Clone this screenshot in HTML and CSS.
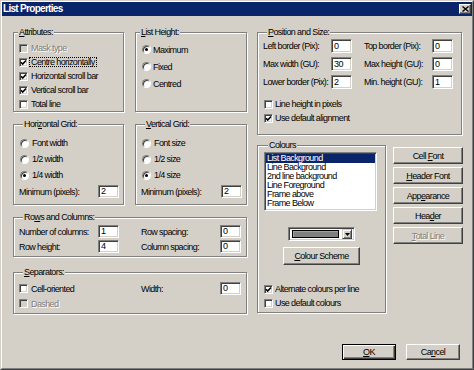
FILE: index.html
```html
<!DOCTYPE html>
<html>
<head>
<meta charset="utf-8">
<title>List Properties</title>
<link rel="stylesheet" href="styles.css">
</head>
<body>
<div class="window">
  <div class="frame">
    <div class="titlebar">
      <span class="title">List Properties</span>
      <span class="close"><svg width="7" height="6" viewBox="0 0 7 6"><path d="M0.5 0.5 L6.5 5.5 M6.5 0.5 L0.5 5.5" stroke="#000" stroke-width="1.4" fill="none"/></svg></span>
    </div>
    <div class="content">
      <div class="main">
        <div class="col-left">
          <div class="row-pair pair-top">
            <div class="group g-attr">
              <div class="legend"><u>A</u>ttributes:</div>
              <div class="list">
                <div class="check disabled"><span class="cb"></span><span>Mask type</span></div>
                <div class="check"><span class="cb"><svg width="7" height="7" viewBox="0 0 7 7"><path d="M1 3.2 L2.7 5 L6 1.5" stroke="#000" stroke-width="1.6" fill="none"/></svg></span><span class="focus">Centre horizontally</span></div>
                <div class="check"><span class="cb"><svg width="7" height="7" viewBox="0 0 7 7"><path d="M1 3.2 L2.7 5 L6 1.5" stroke="#000" stroke-width="1.6" fill="none"/></svg></span><span>Horizontal scroll bar</span></div>
                <div class="check"><span class="cb"><svg width="7" height="7" viewBox="0 0 7 7"><path d="M1 3.2 L2.7 5 L6 1.5" stroke="#000" stroke-width="1.6" fill="none"/></svg></span><span>Vertical scroll bar</span></div>
                <div class="check"><span class="cb"></span><span>Total line</span></div>
              </div>
            </div>
            <div class="group g-height">
              <div class="legend"><u>L</u>ist Height:</div>
              <div class="list">
                <div class="radio"><span class="rb on"></span><span>Maximum</span></div>
                <div class="radio"><span class="rb"></span><span>Fixed</span></div>
                <div class="radio"><span class="rb"></span><span>Centred</span></div>
              </div>
            </div>
          </div>
          <div class="row-pair pair-grid">
            <div class="group g-grid">
              <div class="legend">Hori<u>z</u>ontal Grid:</div>
              <div class="list">
                <div class="radio"><span class="rb"></span><span>Font width</span></div>
                <div class="radio"><span class="rb"></span><span>1/2 width</span></div>
                <div class="radio"><span class="rb on"></span><span>1/4 width</span></div>
              </div>
              <div class="min-row"><span>Minimum (pixels):</span><span class="input">2</span></div>
            </div>
            <div class="group g-grid g-grid2">
              <div class="legend"><u>V</u>ertical Grid:</div>
              <div class="list">
                <div class="radio"><span class="rb"></span><span>Font size</span></div>
                <div class="radio"><span class="rb"></span><span>1/2 size</span></div>
                <div class="radio"><span class="rb on"></span><span>1/4 size</span></div>
              </div>
              <div class="min-row"><span>Minimum (pixels):</span><span class="input">2</span></div>
            </div>
          </div>
          <div class="group g-rows">
            <div class="legend">Ro<u>w</u>s and Columns:</div>
            <div class="fields">
              <span>Number of columns:</span><span class="input">1</span><span class="lbl2">Row spacing:</span><span class="input">0</span>
              <span>Row height:</span><span class="input">4</span><span class="lbl2">Column spacing:</span><span class="input">0</span>
            </div>
          </div>
          <div class="group g-sep">
            <div class="legend"><u>S</u>eparators:</div>
            <div class="fields">
              <div class="check span2"><span class="cb"></span><span>Cell-oriented</span></div><span class="lbl2">Width:</span><span class="input">0</span>
              <div class="check span2 disabled"><span class="cb"></span><span>Dashed</span></div>
            </div>
          </div>
        </div>
        <div class="col-right">
          <div class="group g-pos">
            <div class="legend"><u>P</u>osition and Size:</div>
            <div class="fields">
              <span>Left border (Pix):</span><span class="input">0</span><span class="lbl2">Top border (Pix):</span><span class="input">0</span>
              <span>Max width (GU):</span><span class="input">30</span><span class="lbl2">Max height (GU):</span><span class="input">0</span>
              <span>Lower border (Pix):</span><span class="input">2</span><span class="lbl2">Min. height (GU):</span><span class="input">1</span>
            </div>
            <div class="list">
              <div class="check"><span class="cb"></span><span>Line height in pixels</span></div>
              <div class="check"><span class="cb"><svg width="7" height="7" viewBox="0 0 7 7"><path d="M1 3.2 L2.7 5 L6 1.5" stroke="#000" stroke-width="1.6" fill="none"/></svg></span><span>Use default alignment</span></div>
            </div>
          </div>
          <div class="colours-row">
            <div class="group g-col">
              <div class="legend">Colours</div>
              <div class="listbox">
                <div class="item sel">List Background</div>
                <div class="item">Line Background</div>
                <div class="item">2nd line background</div>
                <div class="item">Line Foreground</div>
                <div class="item">Frame above</div>
                <div class="item">Frame Below</div>
              </div>
              <div class="combo">
                <span class="swatch"></span>
                <span class="drop"><svg width="5" height="3" viewBox="0 0 5 3"><path d="M0 0 H5 L2.5 3 Z" fill="#000"/></svg></span>
              </div>
              <div class="btn scheme"><span><u>C</u>olour Scheme</span></div>
              <div class="list">
                <div class="check"><span class="cb"><svg width="7" height="7" viewBox="0 0 7 7"><path d="M1 3.2 L2.7 5 L6 1.5" stroke="#000" stroke-width="1.6" fill="none"/></svg></span><span>Alternate colours per line</span></div>
                <div class="check"><span class="cb"></span><span>Use default colours</span></div>
              </div>
            </div>
            <div class="btn-col">
              <div class="btn"><span>Cell <u>F</u>ont</span></div>
              <div class="btn"><span><u>H</u>eader Font</span></div>
              <div class="btn"><span>App<u>e</u>arance</span></div>
              <div class="btn"><span>Hea<u>d</u>er</span></div>
              <div class="btn disabled"><span><u>T</u>otal Line</span></div>
            </div>
          </div>
        </div>
      </div>
      <div class="footer">
        <div class="btn default"><span><u>O</u>K</span></div>
        <div class="btn"><span>Ca<u>n</u>cel</span></div>
      </div>
    </div>
  </div>
</div>
</body>
</html>
```
FILE: styles.css
```css
* { box-sizing: border-box; }
html, body { margin: 0; padding: 0; }
body {
  width: 474px;
  height: 370px;
  background: #D4D0C8;
  font-family: "Liberation Sans", Arial, sans-serif;
  font-size: 9px;
  letter-spacing: -0.6px;
  color: #000;
  overflow: hidden;
}
u { text-decoration: underline; text-underline-offset: 1px; }

.window {
  width: 474px;
  height: 370px;
  border: 1px solid;
  border-color: #D4D0C8 #404040 #404040 #D4D0C8;
}
.frame {
  height: 100%;
  border: 1px solid;
  border-color: #FFFFFF #808080 #808080 #FFFFFF;
  display: flex;
  flex-direction: column;
}
.titlebar {
  height: 14px;
  flex: none;
  background: #0A246A;
  display: flex;
  align-items: center;
  justify-content: space-between;
  padding: 0 1px 0 1px;
}
.title {
  color: #fff;
  font-weight: bold;
  font-size: 10px;
  letter-spacing: -0.7px;
  line-height: 12px;
}
.close {
  width: 12px;
  height: 10px;
  background: #D4D0C8;
  border: 1px solid;
  border-color: #fff #404040 #404040 #fff;
  box-shadow: inset -1px -1px 0 #808080;
  display: flex;
  align-items: center;
  justify-content: center;
}
.close svg { display: block; }

.content { padding: 16px 0 0 11px; }
.main { display: flex; gap: 10px; align-items: flex-start; }
.col-left { width: 234px; display: flex; flex-direction: column; }
.col-right { width: 206px; display: flex; flex-direction: column; }

.row-pair { display: flex; gap: 11px; }
.pair-top { height: 80px; margin-bottom: 12px; }
.pair-grid { height: 81px; margin-bottom: 12px; }
.row-pair > .group:first-child { width: 111px; flex: none; }
.row-pair > .group:last-child { flex: 1; }

.group {
  border: 1px solid #808080;
  box-shadow: inset 1px 1px 0 #fff, 1px 1px 0 #fff;
  display: flex;
  flex-direction: column;
}
.legend {
  align-self: flex-start;
  height: 11px;
  line-height: 11px;
  margin: -6px 0 0 4px;
  padding: 0 1px;
  background: #D4D0C8;
  white-space: nowrap;
}

.check, .radio { display: flex; align-items: center; white-space: nowrap; }
.check { height: 14px; }
.cb {
  width: 9px;
  height: 9px;
  flex: none;
  margin-right: 3px;
  border: 1px solid;
  border-color: #808080 #fff #fff #808080;
  box-shadow: inset 1px 1px 0 #404040, inset -1px -1px 0 #D4D0C8;
  background: #fff;
  display: flex;
  align-items: center;
  justify-content: center;
}
.cb svg { display: block; }
.disabled { color: #808080; text-shadow: 1px 1px 0 #fff; }
.disabled .cb { background: #D4D0C8; }
.focus {
  outline: 1px dotted #000;
  outline-offset: 0;
  line-height: 8px;
  padding: 0 1px;
  margin-left: -1px;
}
.rb {
  width: 9px;
  height: 9px;
  flex: none;
  border-radius: 50%;
  border: 1px solid;
  border-color: #808080 #fff #fff #808080;
  box-shadow: inset 1px 1px 0 #404040;
  background: #fff;
  display: flex;
  align-items: center;
  justify-content: center;
  margin-right: 3px;
}
.rb.on::after {
  content: "";
  width: 3px;
  height: 3px;
  border-radius: 50%;
  background: #000;
}

.input {
  width: 21px;
  height: 13px;
  border: 1px solid;
  border-color: #808080 #fff #fff #808080;
  box-shadow: inset 1px 1px 0 #404040, inset -1px -1px 0 #D4D0C8;
  background: #fff;
  padding-left: 2px;
  line-height: 11px;
  align-self: center;
}

/* Attributes */
.g-attr .list { margin-top: 3px; padding-left: 5px; }
/* List height */
.g-height .list { margin-top: 3px; padding-left: 6px; }
.g-height .radio { height: 17px; }
.g-height .rb { margin-right: 2px; }

/* Grids */
.g-grid { padding: 0 4px 0 5px; }
.g-grid .list { margin-top: 5px; padding-left: 1px; }
.g-grid .radio { height: 16px; }
.min-row { display: flex; align-items: center; justify-content: space-between; height: 17px; white-space: nowrap; }

/* Rows and columns */
.g-rows { height: 40px; margin-bottom: 15px; padding: 0 5px; }
.fields { display: grid; align-items: center; white-space: nowrap; }
.g-rows .fields, .g-sep .fields {
  grid-template-columns: 79px 21px 1fr 21px;
  grid-auto-rows: 15px;
}
.g-rows .fields { margin-top: 1px; }
.lbl2 { padding-left: 22px; }
.span2 { grid-column: 1 / span 2; }

/* Separators */
.g-sep { height: 42px; padding: 0 5px; }
.g-sep .fields { margin-top: 3px; }

/* Position */
.g-pos { width: 205px; height: 103px; padding: 0 8px 0 5px; }
.g-pos .fields {
  grid-template-columns: 68px 21px 1fr 21px;
  grid-auto-rows: 18px;
  margin-top: -1px;
}
.g-pos .lbl2 { padding-left: 12px; }
.g-pos .input { height: 14px; line-height: 12px; }
.g-pos .list { margin-top: 6px; padding-left: 1px; }
.g-pos .cb, .g-col .cb { margin-right: 2px; }

/* Colours */
.colours-row { display: flex; gap: 7px; margin-top: 10px; align-items: flex-start; }
.g-col { width: 129px; height: 168px; flex: none; padding: 0 6px; }
.listbox {
  margin-top: 1px;
  width: 113px;
  height: 59px;
  border: 1px solid;
  border-color: #808080 #fff #fff #808080;
  box-shadow: inset 1px 1px 0 #404040, inset -1px -1px 0 #D4D0C8;
  background: #fff;
  padding: 1px;
}
.item {
  height: 9px;
  line-height: 9px;
  padding-left: 1px;
  white-space: nowrap;
}
.item.sel { background: #0A246A; color: #fff; }
.combo {
  align-self: center;
  margin-top: 16px;
  width: 67px;
  height: 14px;
  border: 1px solid;
  border-color: #808080 #fff #fff #808080;
  box-shadow: inset 1px 1px 0 #404040, inset -1px -1px 0 #D4D0C8;
  background: #fff;
  padding: 2px 2px 2px 3px;
  display: flex;
  align-items: center;
  gap: 3px;
}
.swatch {
  flex: 1;
  height: 8px;
  background: #808080;
  border: 1px solid #000;
  box-shadow: inset 1px 1px 0 #A0A0A0;
}
.drop {
  width: 10px;
  height: 10px;
  flex: none;
  background: #D4D0C8;
  border: 1px solid;
  border-color: #D4D0C8 #404040 #404040 #D4D0C8;
  box-shadow: inset 1px 1px 0 #fff, inset -1px -1px 0 #808080;
  display: flex;
  align-items: center;
  justify-content: center;
}
.drop svg { display: block; }
.g-col .list { margin-top: 17px; }

.btn {
  border: 1px solid;
  border-color: #fff #404040 #404040 #fff;
  box-shadow: inset -1px -1px 0 #808080;
  background: #D4D0C8;
  display: flex;
  align-items: center;
  justify-content: center;
  white-space: nowrap;
}
.scheme { align-self: center; margin-top: 6px; width: 77px; height: 18px; }
.btn-col { width: 70px; display: flex; flex-direction: column; gap: 3px; margin-top: 2px; }
.btn-col .btn { height: 17px; }

.footer {
  display: flex;
  justify-content: flex-end;
  gap: 10px;
  margin-top: 30px;
  padding-right: 12px;
}
.footer .btn { width: 54px; height: 16px; }
.btn.default {
  border: 1px solid #000;
  box-shadow: inset 1px 1px 0 #fff, inset -1px -1px 0 #404040, inset -2px -2px 0 #808080;
}
```
